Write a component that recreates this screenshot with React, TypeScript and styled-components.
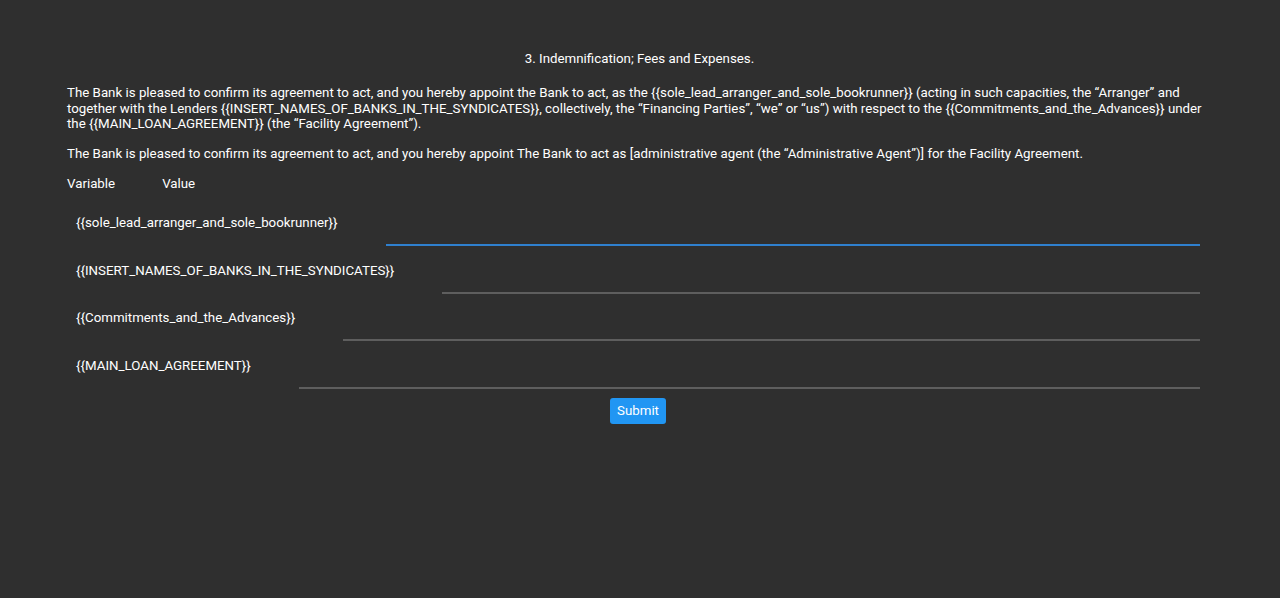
import styled, { createGlobalStyle } from 'styled-components'

const GlobalStyle = createGlobalStyle`
  html, body {
    margin: 0;
    padding: 0;
    background: #2f2f2f;
  }
  body {
    font-family: Roboto, "Liberation Sans", sans-serif;
    color: #fff;
    font-size: 13.3px;
  }
`

const variables = [
  { name: '{{sole_lead_arranger_and_sole_bookrunner}}', focused: true },
  { name: '{{INSERT_NAMES_OF_BANKS_IN_THE_SYNDICATES}}', focused: false },
  { name: '{{Commitments_and_the_Advances}}', focused: false },
  { name: '{{MAIN_LOAN_AGREEMENT}}', focused: false },
]

const App = () => {
  return (
    <Page>
      <GlobalStyle />
      <Title>3. Indemnification; Fees and Expenses.</Title>
      <Paragraph>
        The Bank is pleased to confirm its agreement to act, and you hereby appoint the Bank to act, as the
        {' {{sole_lead_arranger_and_sole_bookrunner}} '}(acting in such capacities, the “Arranger” and together with the
        Lenders {'{{INSERT_NAMES_OF_BANKS_IN_THE_SYNDICATES}}'}, collectively, the “Financing Parties”, “we” or “us”) with
        respect to the {'{{Commitments_and_the_Advances}}'} under the {'{{MAIN_LOAN_AGREEMENT}}'} (the “Facility
        Agreement”).
      </Paragraph>
      <Paragraph>
        The Bank is pleased to confirm its agreement to act, and you hereby appoint The Bank to act as [administrative
        agent (the “Administrative Agent”)] for the Facility Agreement.
      </Paragraph>
      <HeaderRow>
        <span>Variable</span>
        <span>Value</span>
      </HeaderRow>
      <Form>
        {variables.map((v) => (
          <Row key={v.name}>
            <Label>{v.name}</Label>
            <Input $focused={v.focused} type="text" />
          </Row>
        ))}
        <Actions>
          <SubmitButton type="button">Submit</SubmitButton>
        </Actions>
      </Form>
    </Page>
  )
}

const Page = styled.div`
  padding: 51px 68px 40px 67px;
  min-height: 598px;
  box-sizing: border-box;
`

const Title = styled.div`
  text-align: center;
  line-height: 16px;
  margin-bottom: 18px;
`

const Paragraph = styled.p`
  margin: 0 0 14px;
  line-height: 15.5px;
  padding-right: 8px;
`

const HeaderRow = styled.div`
  display: flex;
  gap: 47px;
  line-height: 16px;
  margin-top: 15px;
`

const Form = styled.div`
  display: flex;
  flex-direction: column;
  padding: 17px 12px 0 9px;
`

const Row = styled.div`
  display: flex;
  align-items: flex-start;
  gap: 48px;
  height: 47.5px;
`

const Label = styled.div`
  white-space: nowrap;
  line-height: 16px;
  padding-top: 6px;
`

const Input = styled.input<{ $focused: boolean }>`
  flex: 1;
  background: transparent;
  border: none;
  border-bottom: 2px solid ${(p) => (p.$focused ? '#2f80cf' : '#5e5e5e')};
  height: 20px;
  margin-top: 15px;
  outline: none;
  color: #fff;
  font: inherit;
  padding: 0;
`

const Actions = styled.div`
  display: flex;
  justify-content: center;
  margin-top: -1px;
`

const SubmitButton = styled.button`
  background: #2196f3;
  color: #fff;
  border: none;
  border-radius: 3px;
  font-family: Roboto, "Liberation Sans", sans-serif;
  font-size: 13.3px;
  padding: 0 7px;
  height: 26px;
  line-height: 26px;
  cursor: pointer;
`

export default App
